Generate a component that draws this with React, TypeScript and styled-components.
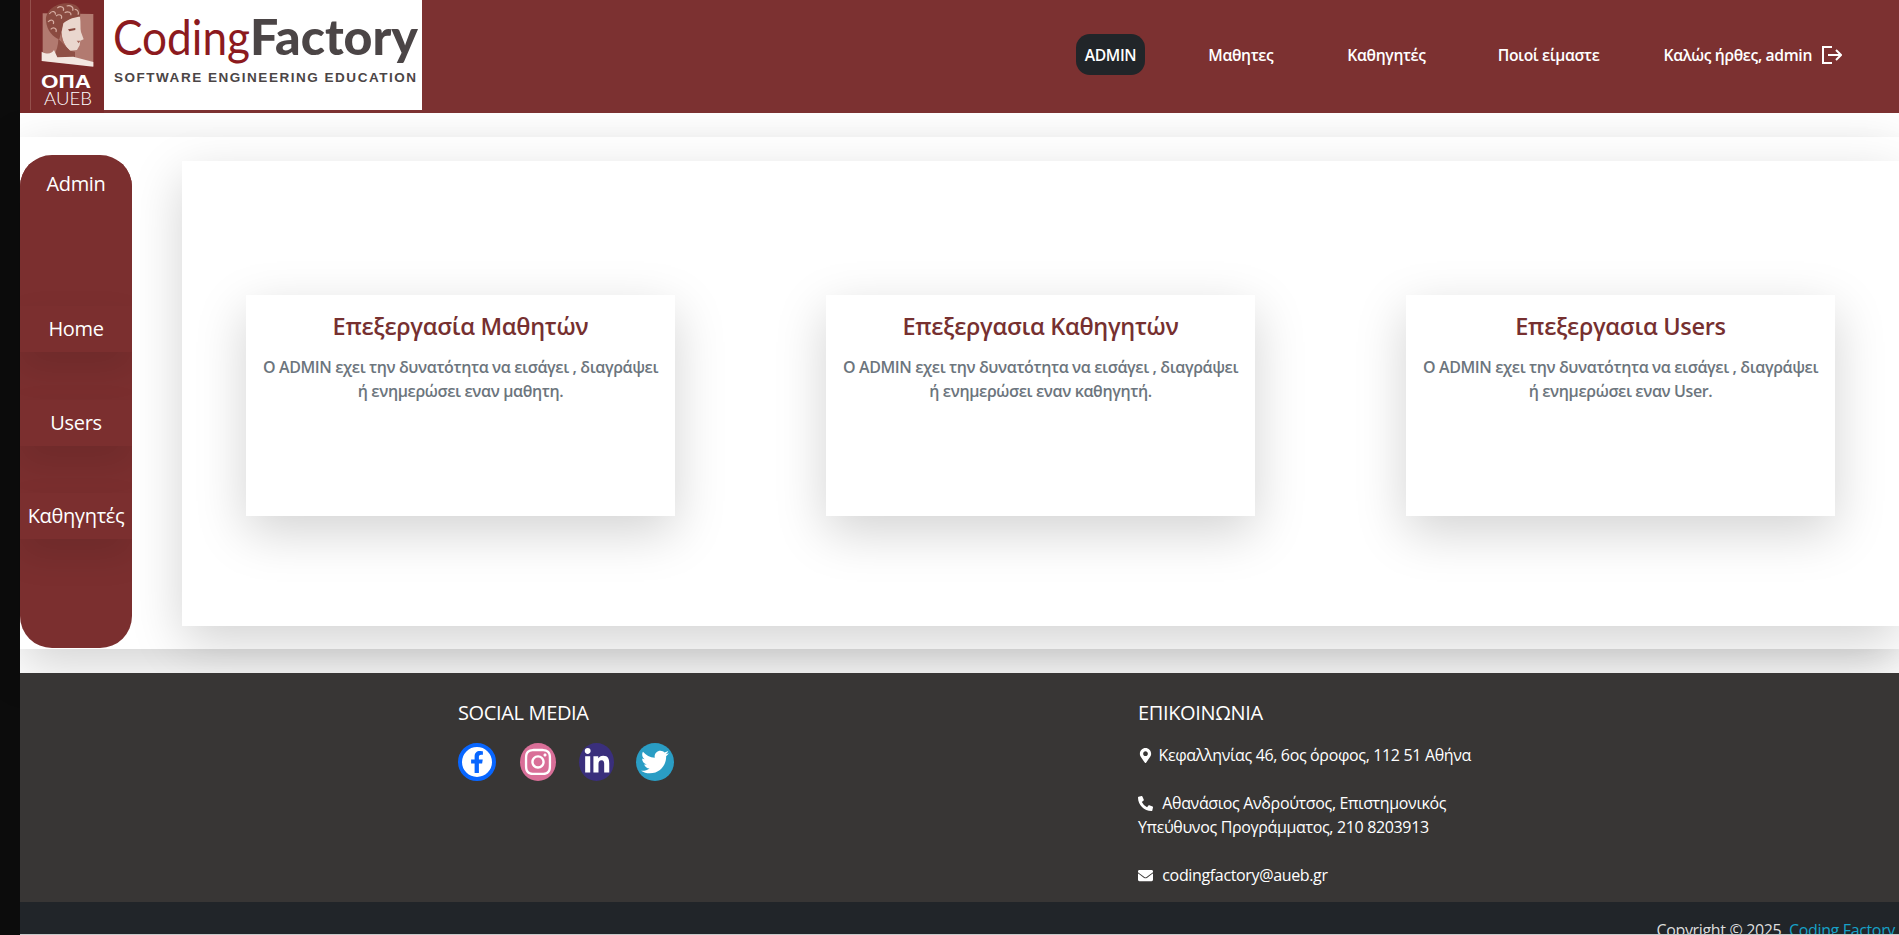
import React from "react";
import styled, { createGlobalStyle } from "styled-components";
import { FaEnvelope, FaFacebookF, FaLinkedinIn, FaMapMarkerAlt, FaPhoneAlt, FaTwitter, FaInstagram } from "react-icons/fa";

const Global = createGlobalStyle`
  html, body { margin: 0; height: 100%; overflow: hidden; background: #fff; }
  * { box-sizing: border-box; }
  body { font-family: "Open Sans", "Noto Sans", sans-serif; }
`;
const shadowLg = "0 16px 48px rgba(0,0,0,.175)";
const Screen = styled.div`display: flex; height: 935px; width: 1899px; overflow: hidden;`;
const Strip = styled.div`flex: 0 0 20px; background: #0c0c0c;`;
const Page = styled.div`flex: 1; min-width: 0; display: flex; flex-direction: column; background: #fff;`;
const Header = styled.header`
  flex: 0 0 113px; display: flex; align-items: flex-start; justify-content: space-between;
  background: #7c3131; position: relative; z-index: 2;
`;
const Nav = styled.nav`display: flex; align-items: center; height: 41px; margin-top: 34px; padding-right: 57px;`;
const NavItem = styled.a<{ $gap: number; $active?: boolean }>`
  display: flex; align-items: center; height: 41px; margin-left: ${(p) => p.$gap}px;
  padding: 0 ${(p) => (p.$active ? 9 : 0)}px; border-radius: 14px;
  background: ${(p) => (p.$active ? "#212529" : "transparent")};
  color: #fff; font-size: 15.7px; font-weight: 600; letter-spacing: -0.35px; white-space: nowrap;
`;
const LogoutIcon = styled.svg`margin-left: 10px; flex: none;`;
const Main = styled.main`
  flex: 0 0 512px; margin: 24px 0; display: flex; align-items: flex-start; background: #fff;
  box-shadow: ${shadowLg};
`;
const Sidebar = styled.aside`
  flex: 0 0 112px; height: 493px; margin-top: 18px; border-radius: 32px; overflow: hidden;
  background: #7b2f2f; display: flex; flex-direction: column; position: relative; z-index: 1;
`;
const SideItem = styled.a<{ $top: number; $plain?: boolean }>`
  display: block; margin-top: ${(p) => p.$top}px; height: 46px; line-height: 46px; text-align: center;
  color: #fff; font-size: 20px; letter-spacing: -0.35px; white-space: nowrap;
  background: #7b2f2f; box-shadow: ${(p) => (p.$plain ? "none" : "0 16px 36px rgba(0,0,0,.11)")};
`;
const Panel = styled.section`
  flex: 1; min-width: 0; margin: 24px 0 0 50px; height: 465px; padding: 134px 64px 0 64px;
  display: flex; justify-content: space-between; align-items: flex-start;
  background: #fff; box-shadow: ${shadowLg};
`;
const Card = styled.article`
  width: 429px; height: 221px; padding: 16px 8px; text-align: center; background: #fff;
  box-shadow: ${shadowLg};
`;
const CardTitle = styled.h5`
  margin: 0 0 14px; font-size: 23.5px; line-height: 30px; font-weight: 600; color: #763030; letter-spacing: -0.3px;
`;
const CardText = styled.p`
  margin: 0; font-size: 16px; line-height: 24px; font-weight: 600; color: #6c757d; letter-spacing: -0.39px;
  white-space: nowrap;
`;
const Footer = styled.footer`
  flex: 0 0 229px; min-height: 0; overflow: hidden; display: flex; padding: 25px 0 0 438px;
  background: #383635; color: #fff;
`;
const FootCol = styled.div`flex: 0 0 680px;`;
const FootTitle = styled.h6`
  margin: 0 0 15px; font-size: 20px; line-height: 30px; font-weight: 400; color: #fff; letter-spacing: -0.35px;
`;
const Socials = styled.div`display: flex;`;
const Social = styled.a<{ $bg: string; $fg: string; $w: number; $gap: number; $ring?: boolean }>`
  display: flex; align-items: center; justify-content: center;
  width: ${(p) => p.$w}px; height: 38px; margin-left: ${(p) => p.$gap}px; border-radius: 50%;
  background: ${(p) => p.$bg}; color: ${(p) => p.$fg};
  border: ${(p) => (p.$ring ? "4px solid #0866ff" : "none")};
`;
const Contact = styled.p`
  margin: 0 0 24px; font-size: 16px; line-height: 24px; color: #fff; letter-spacing: -0.35px; width: 420px;
  svg { vertical-align: -2px; margin-right: 5.5px; font-size: 15px; }
`;
const Bottom = styled.div`
  flex: 0 0 32px; overflow: hidden; background: #212529; color: #ddd; text-align: right;
  padding: 16px 4px 0 0; font-size: 16px; line-height: 24px; letter-spacing: -0.35px; white-space: nowrap;
  a { color: #17a2c8; }
`;
const Edge = styled.div`flex: 0 0 1px; background: #c8c8c8;`;

function Logo() {
  return (
    <svg width="402" height="113" viewBox="0 0 402 113" style={{ display: "block", flex: "none" }}>
      <rect x="0" y="0" width="84" height="113" fill="#7a2a2a" />
      <rect x="10" y="0" width="1" height="110" fill="#94504c" />
      <g transform="translate(10 0) scale(.3333)">
        <polygon points="38,40 190,42 190,198 38,182" fill="#b27a70" />
        <path d="M48,62 C46,28 82,8 115,10 C140,12 156,25 150,50 L130,56 C110,60 100,72 95,92 L88,118 C70,112 50,92 48,62 Z" fill="#8a4a40" />
        <g fill="none" stroke="#d6aea3" strokeWidth="3.5">
          <path d="M58,42 C66,30 78,34 76,44" /><path d="M82,24 C92,16 104,22 100,32" /><path d="M110,18 C122,14 132,22 128,32" />
          <path d="M54,66 C62,56 74,60 70,72" /><path d="M78,48 C88,40 98,46 94,56" /><path d="M104,38 C114,32 126,38 122,46" />
          <path d="M62,88 C70,80 82,84 78,96" /><path d="M134,28 C142,28 148,36 144,44" />
        </g>
        <path d="M100,70 C115,56 138,50 150,50 C153,70 150,85 153,96 L161,118 L151,122 L149,136 L141,150 L120,152 C105,140 95,120 95,96 Z" fill="#ead7ce" />
        <path d="M95,96 C95,120 105,140 120,152 L106,152 C94,132 88,116 95,96 Z" fill="#a76a5e" />
        <path d="M114,88 L136,84 L136,90 L118,94 Z" fill="#8a4a40" />
        <path d="M140,122 L151,122 L146,130 Z" fill="#a76a5e" />
        <path d="M85,116 L120,152 L135,155 L135,175 L160,186 L70,172 C80,152 85,136 85,116 Z" fill="#8f5046" />
        <path d="M35,155 C55,166 65,160 72,150 L82,172 L130,170 L190,186 L190,200 L35,183 Z" fill="#f2e6e0" />
      </g>
      <text x="21" y="88" fontFamily="Liberation Sans, sans-serif" fontWeight="700" fontSize="18" fill="#fff" textLength="50" lengthAdjust="spacingAndGlyphs">ΟΠΑ</text>
      <text x="24" y="105" fontFamily="Lato, sans-serif" fontWeight="300" fontSize="17" fill="#fff" textLength="48" lengthAdjust="spacingAndGlyphs">AUEB</text>
      <rect x="84" y="0" width="318" height="110" fill="#fff" />
      <text x="93" y="55" fontFamily="Lato, sans-serif" fontSize="49" fill="#8c1a1e" textLength="137" lengthAdjust="spacingAndGlyphs">Coding</text>
      <text x="230" y="55" fontFamily="Lato, sans-serif" fontWeight="900" fontSize="49" fill="#4b4546" textLength="168" lengthAdjust="spacingAndGlyphs">Factory</text>
      <text x="94" y="82" fontFamily="Liberation Sans, sans-serif" fontWeight="700" fontSize="13.5" fill="#4b4546" textLength="302">SOFTWARE ENGINEERING EDUCATION</text>
    </svg>
  );
}

const cards = [
  ["Επεξεργασία Μαθητών", "εναν μαθητη."],
  ["Επεξεργασια Καθηγητών", "εναν καθηγητή."],
  ["Επεξεργασια Users", "εναν User."],
];

export default function App() {
  return (
    <>
      <Global />
      <Screen>
        <Strip />
        <Page>
          <Header>
            <Logo />
            <Nav>
              <NavItem $gap={0} $active>ADMIN</NavItem>
              <NavItem $gap={63}>Μαθητες</NavItem>
              <NavItem $gap={74}>Καθηγητές</NavItem>
              <NavItem $gap={72}>Ποιοί είμαστε</NavItem>
              <NavItem $gap={64}>
                Καλώς ήρθες, admin
                <LogoutIcon width="20" height="18" viewBox="0 0 20 18" fill="none" stroke="#fff" strokeWidth="2">
                  <path d="M10 1H1v16h9" />
                  <path d="M6 9h13" />
                  <path d="M14 4l5 5-5 5" />
                </LogoutIcon>
              </NavItem>
            </Nav>
          </Header>
          <Main>
            <Sidebar>
              <SideItem $top={6} $plain>Admin</SideItem>
              <SideItem $top={99}>Home</SideItem>
              <SideItem $top={48}>Users</SideItem>
              <SideItem $top={47}>Καθηγητές</SideItem>
            </Sidebar>
            <Panel>
              {cards.map(([title, end]) => (
                <Card key={title}>
                  <CardTitle>{title}</CardTitle>
                  <CardText>O ADMIN εχει την δυνατότητα να εισάγει , διαγράψει<br />ή ενημερώσει {end}</CardText>
                </Card>
              ))}
            </Panel>
          </Main>
          <Footer>
            <FootCol>
              <FootTitle>SOCIAL MEDIA</FootTitle>
              <Socials>
                <Social $bg="#fff" $fg="#0866ff" $w={38} $gap={0} $ring><FaFacebookF size={22} /></Social>
                <Social $bg="#d96f98" $fg="#fff" $w={36} $gap={24}><FaInstagram size={30} /></Social>
                <Social $bg="#3a2f7c" $fg="#fff" $w={35} $gap={23}><FaLinkedinIn size={28} /></Social>
                <Social $bg="#2a9dc4" $fg="#fff" $w={38} $gap={22}><FaTwitter size={28} /></Social>
              </Socials>
            </FootCol>
            <FootCol>
              <FootTitle>ΕΠΙΚΟΙΝΩΝΙΑ</FootTitle>
              <Contact><FaMapMarkerAlt />Κεφαλληνίας 46, 6ος όροφος, 112 51 Αθήνα</Contact>
              <Contact><FaPhoneAlt /> Αθανάσιος Ανδρούτσος, Επιστημονικός<br />Υπεύθυνος Προγράμματος, 210 8203913</Contact>
              <Contact><FaEnvelope /> codingfactory@aueb.gr</Contact>
            </FootCol>
          </Footer>
          <Bottom>Copyright © 2025, <a>Coding Factory</a></Bottom>
          <Edge />
        </Page>
      </Screen>
    </>
  );
}
